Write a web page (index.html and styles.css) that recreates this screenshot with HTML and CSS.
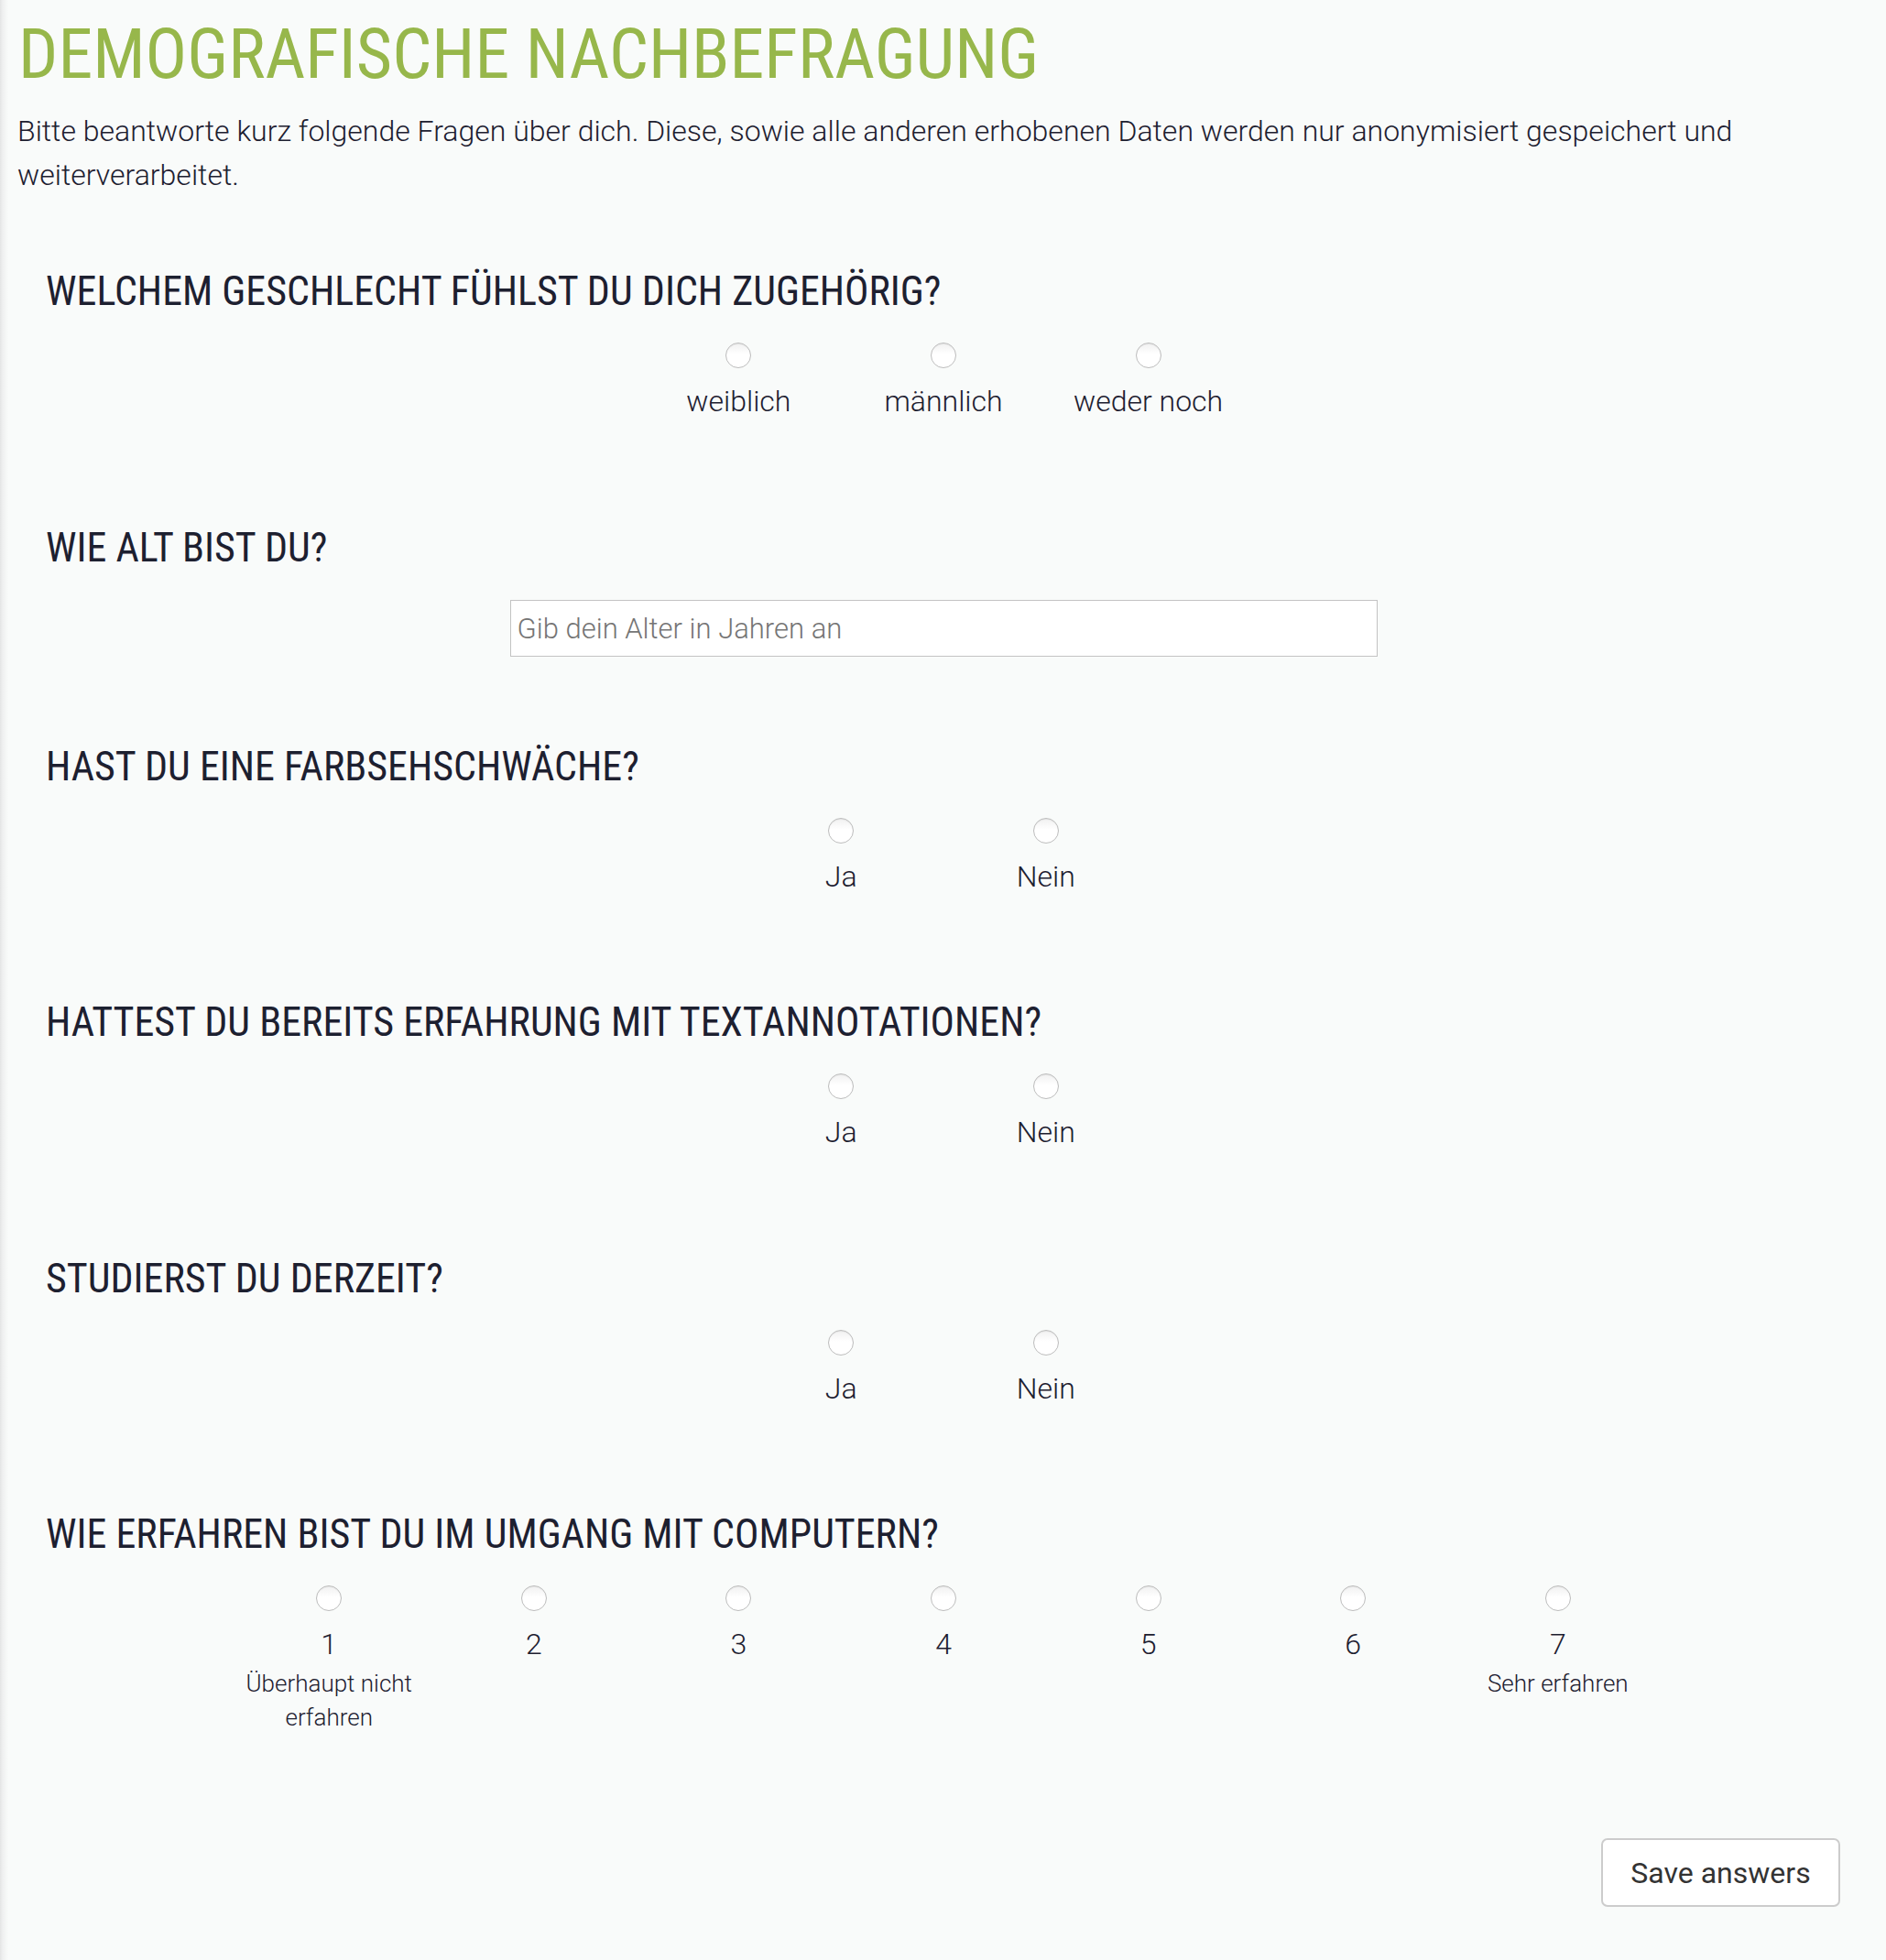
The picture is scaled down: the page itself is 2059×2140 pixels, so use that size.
FILE: index.html
```html
<!DOCTYPE html>
<html lang="de">
<head>
<meta charset="utf-8">
<title>Demografische Nachbefragung</title>
<link rel="stylesheet" href="styles.css">
</head>
<body>
<main class="page">
  <h1 class="title">DEMOGRAFISCHE NACHBEFRAGUNG</h1>
  <p class="intro">Bitte beantworte kurz folgende Fragen über dich. Diese, sowie alle anderen erhobenen Daten werden nur anonymisiert gespeichert und weiterverarbeitet.</p>

  <form class="survey">
    <section class="question">
      <h2 class="q-title">WELCHEM GESCHLECHT FÜHLST DU DICH ZUGEHÖRIG?</h2>
      <div class="options">
        <label class="option"><input type="radio" name="gender"><span class="opt-label">weiblich</span></label>
        <label class="option"><input type="radio" name="gender"><span class="opt-label">männlich</span></label>
        <label class="option"><input type="radio" name="gender"><span class="opt-label">weder noch</span></label>
      </div>
    </section>

    <section class="question q-input">
      <h2 class="q-title">WIE ALT BIST DU?</h2>
      <div class="input-row">
        <input class="text-input" type="text" placeholder="Gib dein Alter in Jahren an">
      </div>
    </section>

    <section class="question">
      <h2 class="q-title">HAST DU EINE FARBSEHSCHWÄCHE?</h2>
      <div class="options">
        <label class="option"><input type="radio" name="color"><span class="opt-label">Ja</span></label>
        <label class="option"><input type="radio" name="color"><span class="opt-label">Nein</span></label>
      </div>
    </section>

    <section class="question">
      <h2 class="q-title">HATTEST DU BEREITS ERFAHRUNG MIT TEXTANNOTATIONEN?</h2>
      <div class="options">
        <label class="option"><input type="radio" name="annot"><span class="opt-label">Ja</span></label>
        <label class="option"><input type="radio" name="annot"><span class="opt-label">Nein</span></label>
      </div>
    </section>

    <section class="question">
      <h2 class="q-title">STUDIERST DU DERZEIT?</h2>
      <div class="options">
        <label class="option"><input type="radio" name="study"><span class="opt-label">Ja</span></label>
        <label class="option"><input type="radio" name="study"><span class="opt-label">Nein</span></label>
      </div>
    </section>

    <section class="question q-scale">
      <h2 class="q-title">WIE ERFAHREN BIST DU IM UMGANG MIT COMPUTERN?</h2>
      <div class="options">
        <label class="option"><input type="radio" name="exp"><span class="opt-label">1</span><span class="opt-sub">Überhaupt nicht erfahren</span></label>
        <label class="option"><input type="radio" name="exp"><span class="opt-label">2</span></label>
        <label class="option"><input type="radio" name="exp"><span class="opt-label">3</span></label>
        <label class="option"><input type="radio" name="exp"><span class="opt-label">4</span></label>
        <label class="option"><input type="radio" name="exp"><span class="opt-label">5</span></label>
        <label class="option"><input type="radio" name="exp"><span class="opt-label">6</span></label>
        <label class="option"><input type="radio" name="exp"><span class="opt-label">7</span><span class="opt-sub">Sehr erfahren</span></label>
      </div>
    </section>

    <div class="actions">
      <button type="button" class="save-btn">Save answers</button>
    </div>
  </form>
</main>
</body>
</html>
```

FILE: styles.css
```css
html, body {
  margin: 0;
  padding: 0;
}

body {
  background-color: #f9fbfa;
  background-image: linear-gradient(to right, #e4e5e5 0, #eff0f0 3px, #f9fbfa 9px);
  background-repeat: no-repeat;
  background-size: 10px 100%;
  min-height: 2140px;
  font-family: Roboto, "Liberation Sans", sans-serif;
  font-weight: 300;
  color: #1d2030;
}

.page {
  padding: 18px 20px 0 20px;
}

.title {
  margin: 0;
  font-family: "Roboto Condensed", Roboto, sans-serif;
  font-stretch: 75%;
  font-weight: 400;
  font-size: 76px;
  line-height: 1.1;
  color: #97b74b;
}

.intro {
  margin: 17.5px 0 0 -1px;
  font-size: 32px;
  line-height: 48px;
}

.survey {
  padding: 0 30px 0 30px;
}

.question {
  margin-top: 79px;
}

.question + .question {
  margin-top: 111.5px;
}

.q-input + .question {
  margin-top: 95.5px;
}

.q-title {
  margin: 0;
  font-family: "Roboto Condensed", Roboto, sans-serif;
  font-stretch: 75%;
  font-weight: 400;
  font-size: 44px;
  line-height: 49.5px;
  color: #1d2030;
}

.options {
  display: flex;
  justify-content: center;
  margin-top: 30.5px;
  padding-left: 1px;
}

.option {
  width: 223.6px;
  display: flex;
  flex-direction: column;
  align-items: center;
  text-align: center;
}

.option input[type="radio"] {
  appearance: none;
  -webkit-appearance: none;
  margin: 0;
  width: 28px;
  height: 28px;
  border-radius: 50%;
  border: 1.5px solid #bdbdbd;
  background: linear-gradient(to bottom, #f1f1f1 0%, #ffffff 45%, #ffffff 100%);
  box-shadow: inset 0 1px 1px rgba(0, 0, 0, 0.06);
  box-sizing: border-box;
}

.opt-label {
  display: block;
  margin-top: 12px;
  font-size: 32px;
  line-height: 48px;
}

.opt-sub {
  display: block;
  width: 200px;
  font-size: 26px;
  line-height: 37px;
  margin-top: 1px;
}

.input-row {
  display: flex;
  justify-content: center;
  margin-top: 32px;
  padding-left: 1px;
}

.text-input {
  width: 947px;
  height: 62px;
  box-sizing: border-box;
  margin: 0;
  padding: 0 7px;
  border: 1.5px solid #c3c3c3;
  border-radius: 0;
  background: #ffffff;
  font-family: Roboto, sans-serif;
  font-weight: 300;
  font-size: 31px;
  color: #333;
  outline: none;
}

.text-input::placeholder {
  color: #757575;
}

.actions {
  display: flex;
  justify-content: flex-end;
  margin-top: 113px;
}

.save-btn {
  width: 261px;
  height: 75px;
  box-sizing: border-box;
  padding: 0;
  border: 2px solid #cccccc;
  border-radius: 7px;
  background: #ffffff;
  font-family: Roboto, sans-serif;
  font-weight: 400;
  font-size: 32px;
  color: #333333;
  cursor: pointer;
}
```
